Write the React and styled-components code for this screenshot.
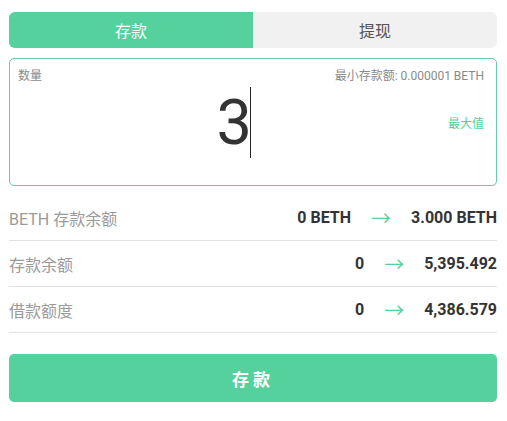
import React, { useState } from "react";
import styled, { createGlobalStyle } from "styled-components";

const GREEN = "#54d19c";

const Global = createGlobalStyle`
  body {
    margin: 0;
    background: #fff;
    font-family: Roboto, "Noto Sans CJK SC", sans-serif;
  }
`;

const Page = styled.div`
  padding: 12px 10px 0 9px;
`;

const Tabs = styled.div`
  display: grid;
  grid-template-columns: 1fr 1fr;
  height: 36px;
  border-radius: 6px;
  overflow: hidden;
  background: #f1f1f1;
`;

const Tab = styled.div`
  display: flex;
  align-items: center;
  justify-content: center;
  font-size: 16px;
  color: ${(p) => (p.active ? "#fff" : "#555")};
  background: ${(p) => (p.active ? GREEN : "transparent")};
  cursor: pointer;
`;

const InputBox = styled.div`
  margin-top: 10px;
  border: 1px solid #62cfa6;
  border-radius: 5px;
  padding: 10px 12px 27px 8px;
`;

const BoxHeader = styled.div`
  display: flex;
  justify-content: space-between;
  font-size: 12px;
  line-height: 15px;
  color: #8a8a8a;
`;

const AmountRow = styled.div`
  margin-top: 3px;
  display: grid;
  grid-template-columns: 1fr 1fr;
  align-items: center;
  height: 71px;
`;

const Amount = styled.div`
  justify-self: end;
  display: flex;
  align-items: center;
  font-size: 63px;
  color: #333;
  line-height: 71px;
`;

const Caret = styled.span`
  display: inline-block;
  width: 1px;
  height: 71px;
  background: #222;
  margin-left: -2px;
`;

const MaxLink = styled.span`
  justify-self: end;
  font-size: 12px;
  color: ${GREEN};
  cursor: pointer;
`;

const Rows = styled.div`
  margin-top: 9px;
`;

const Row = styled.div`
  display: flex;
  align-items: center;
  justify-content: space-between;
  height: 45px;
  border-bottom: 1px solid #e2e2e2;
`;

const Label = styled.span`
  font-size: 16px;
  color: #9a9a9a;
`;

const Change = styled.div`
  display: flex;
  align-items: center;
  gap: 20px;
  font-size: 16px;
  font-weight: 700;
  color: #333;
`;

const Arrow = styled.span`
  color: ${GREEN};
  font-size: 20px;
  font-weight: 400;
  line-height: 1;
  font-family: "Noto Sans CJK SC", sans-serif;
`;

const Submit = styled.button`
  display: block;
  width: 100%;
  height: 48px;
  margin-top: 21px;
  border: none;
  border-radius: 5px;
  background: ${GREEN};
  color: #fff;
  font-family: Roboto, "Noto Sans CJK SC", sans-serif;
  font-size: 17px;
  font-weight: 700;
  letter-spacing: 4px;
  cursor: pointer;
`;

const rows = [
  { label: "BETH 存款余额", from: "0 BETH", to: "3.000 BETH" },
  { label: "存款余额", from: "0", to: "5,395.492" },
  { label: "借款额度", from: "0", to: "4,386.579" },
];

const App = () => {
  const [tab, setTab] = useState("deposit");

  return (
    <Page>
      <Global />
      <Tabs>
        <Tab active={tab === "deposit"} onClick={() => setTab("deposit")}>
          存款
        </Tab>
        <Tab active={tab === "withdraw"} onClick={() => setTab("withdraw")}>
          提现
        </Tab>
      </Tabs>
      <InputBox>
        <BoxHeader>
          <span>数量</span>
          <span>最小存款额: 0.000001 BETH</span>
        </BoxHeader>
        <AmountRow>
          <Amount>
            3<Caret />
          </Amount>
          <MaxLink>最大值</MaxLink>
        </AmountRow>
      </InputBox>
      <Rows>
        {rows.map((r) => (
          <Row key={r.label}>
            <Label>{r.label}</Label>
            <Change>
              <span>{r.from}</span>
              <Arrow>→</Arrow>
              <span>{r.to}</span>
            </Change>
          </Row>
        ))}
      </Rows>
      <Submit>存款</Submit>
    </Page>
  );
};

export default App;
